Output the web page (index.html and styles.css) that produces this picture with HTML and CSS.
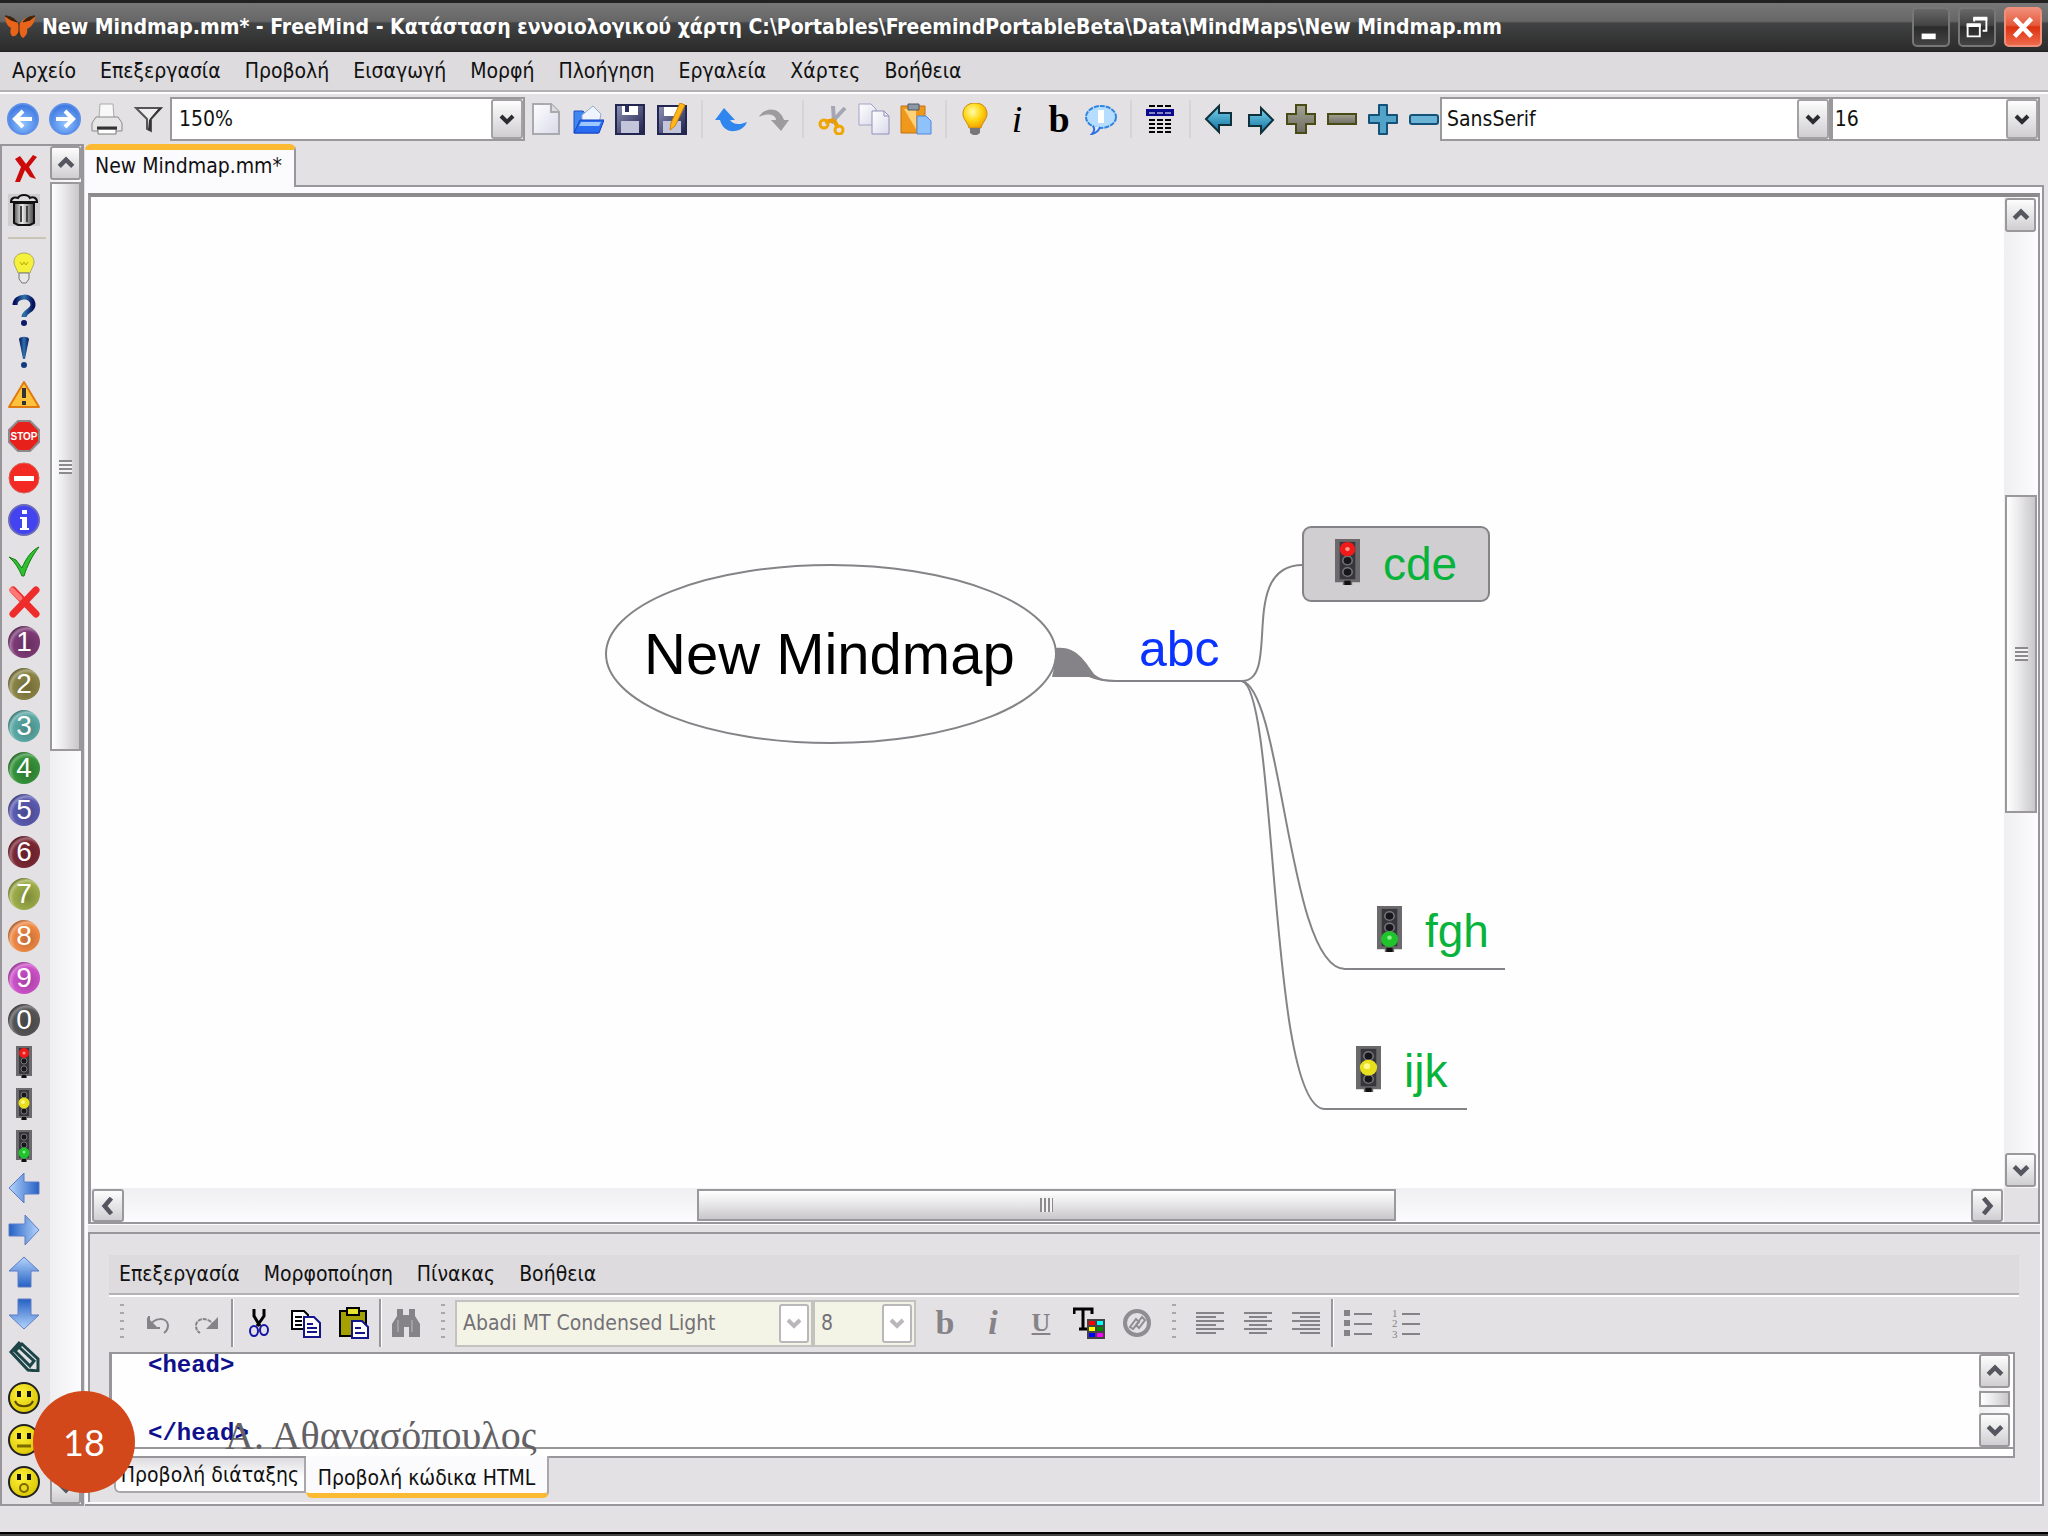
FILE: index.html
```
<!DOCTYPE html>
<html lang="el">
<head>
    <meta charset="UTF-8">
    <title>New Mindmap.mm* - FreeMind</title>
    <link rel="stylesheet" href="styles.css">
</head>
<body>

    <!-- shared gradients and symbols -->
    <svg class="defs" width="0" height="0">
        <defs>
            <radialGradient id="gBlue" cx=".5" cy=".65" r=".6"><stop offset="0" stop-color="#8fc4ff"/><stop offset="1" stop-color="#3f78e0"/></radialGradient>
            <radialGradient id="gBulb" cx=".4" cy=".35" r=".7"><stop offset="0" stop-color="#fffbb0"/><stop offset=".5" stop-color="#ffd916"/><stop offset="1" stop-color="#f09a00"/></radialGradient>
            <radialGradient id="gFace" cx=".4" cy=".35" r=".7"><stop offset="0" stop-color="#fff23a"/><stop offset="1" stop-color="#d9c400"/></radialGradient>
            <linearGradient id="gArrowLeft" x1="0" y1="0" x2="1" y2="0"><stop offset="0" stop-color="#b5d5fc"/><stop offset="1" stop-color="#2460c4"/></linearGradient>
            <linearGradient id="gArrowRight" x1="1" y1="0" x2="0" y2="0"><stop offset="0" stop-color="#b5d5fc"/><stop offset="1" stop-color="#2460c4"/></linearGradient>
            <linearGradient id="gArrowUp" x1="0" y1="1" x2="0" y2="0"><stop offset="0" stop-color="#2460c4"/><stop offset="1" stop-color="#b5d5fc"/></linearGradient>
            <linearGradient id="gArrowDown" x1="0" y1="0" x2="0" y2="1"><stop offset="0" stop-color="#2460c4"/><stop offset="1" stop-color="#b5d5fc"/></linearGradient>
            <linearGradient id="gTeal" x1="0" y1="0" x2="0" y2="1"><stop offset="0" stop-color="#7fd3ee"/><stop offset="1" stop-color="#0a6f9c"/></linearGradient>
            <linearGradient id="gGray" x1="0" y1="0" x2="0" y2="1"><stop offset="0" stop-color="#a3a392"/><stop offset="1" stop-color="#6d6d66"/></linearGradient>
            <linearGradient id="gCan" x1="0" y1="0" x2="1" y2="0"><stop offset="0" stop-color="#555"/><stop offset=".4" stop-color="#eee"/><stop offset="1" stop-color="#444"/></linearGradient>
            <linearGradient id="gDisk" x1="0" y1="0" x2="1" y2="1"><stop offset="0" stop-color="#8f93b8"/><stop offset="1" stop-color="#1c1e48"/></linearGradient>
            <linearGradient id="gPaper" x1="0" y1="0" x2="1" y2="1"><stop offset="0" stop-color="#ffffff"/><stop offset="1" stop-color="#d9d9ea"/></linearGradient>
            <linearGradient id="gMark" x1="0" y1="0" x2="1" y2="0"><stop offset="0" stop-color="#07105c"/><stop offset=".5" stop-color="#2f74ad"/><stop offset="1" stop-color="#07105c"/></linearGradient>
            <symbol id="up" viewBox="0 0 16 16"><path d="M2 11 8 5l6 6" fill="none" stroke="currentColor" stroke-width="4"/></symbol>
            <symbol id="down" viewBox="0 0 16 16"><path d="M2 5l6 6 6-6" fill="none" stroke="currentColor" stroke-width="4"/></symbol>
            <symbol id="left" viewBox="0 0 16 16"><path d="M11 1 5 8l6 7" fill="none" stroke="currentColor" stroke-width="4"/></symbol>
            <symbol id="right" viewBox="0 0 16 16"><path d="M5 1l6 7-6 7" fill="none" stroke="currentColor" stroke-width="4"/></symbol>
            <symbol id="lamp" viewBox="0 0 16 32">
                <path d="M0 0h16v30h-5v2H5v-2H0z" fill="#6b696c"/>
                <rect x="3" y="2" width="10" height="26" fill="#37363c"/>
                <circle cx="8" cy="7" r="3" fill="#17171b" stroke="#77757a"/>
                <circle cx="8" cy="15" r="3" fill="#17171b" stroke="#77757a"/>
                <circle cx="8" cy="23" r="3" fill="#17171b" stroke="#77757a"/>
                <rect x="6" y="29" width="4" height="3" fill="#111"/>
            </symbol>
            <symbol id="lampRed" viewBox="0 0 16 32"><use href="#lamp" width="16" height="32"/><circle cx="8" cy="7" r="5" fill="#f01a1a"/><circle cx="8" cy="7" r="1.5" fill="#ff9a8a"/></symbol>
            <symbol id="lampYellow" viewBox="0 0 16 32"><use href="#lamp" width="16" height="32"/><circle cx="8" cy="15" r="5.5" fill="#e8e01c"/><circle cx="7" cy="14" r="2" fill="#fff98a"/></symbol>
            <symbol id="lampGreen" viewBox="0 0 16 32"><use href="#lamp" width="16" height="32"/><circle cx="8" cy="23" r="5.5" fill="#1fc42c"/><circle cx="8" cy="22" r="1.5" fill="#8af28a"/></symbol>
        </defs>
    </svg>

    <header class="titlebar">
        <svg class="app-icon" viewBox="0 0 32 24"><path d="M1 1c6 0 11 4 14 9C18 4 24 1 31 1c0 6-3 11-8 13 1 4-1 7-4 9-2-1-3-4-4-7-2 4-4 6-7 5-2-2-2-5-1-8C3 11 1 6 1 1z" fill="#e8641a"/><path d="M1 1c5 0 9 2 12 6L7 5zM31 1c-5 0-9 2-12 6l7-2zM15 9v12" fill="#3a2410" stroke="#3a2410"/></svg>
        <h1>New Mindmap.mm* - FreeMind - Κατάσταση εννοιολογικού χάρτη C:\Portables\FreemindPortableBeta\Data\MindMaps\New Mindmap.mm</h1>
        <div class="win-buttons">
            <button type="button" aria-label="Minimize"><svg viewBox="0 0 32 32"><path d="M6 23h15v6H6z" fill="#fff"/></svg></button>
            <button type="button" aria-label="Restore"><svg viewBox="0 0 32 32"><path d="M13 10V7h13v13h-4M6 14h13v12H6z" fill="none" stroke="#fff" stroke-width="2"/><path d="M12 7h15M5 14h15" stroke="#fff" stroke-width="4"/></svg></button>
            <button type="button" class="close" aria-label="Close"><svg viewBox="0 0 32 32"><path d="M7 7l18 19M25 7 7 26" stroke="#fff" stroke-width="5"/></svg></button>
        </div>
    </header>

    <nav class="menubar">
        <a href="#">Αρχείο</a><a href="#">Επεξεργασία</a><a href="#">Προβολή</a><a href="#">Εισαγωγή</a><a href="#">Μορφή</a><a href="#">Πλοήγηση</a><a href="#">Εργαλεία</a><a href="#">Χάρτες</a><a href="#">Βοήθεια</a>
    </nav>

    <div class="toolbar">
        <button type="button" aria-label="Back"><svg viewBox="0 0 32 32"><circle cx="16" cy="16" r="15" fill="url(#gBlue)" stroke="#5d8fe8" stroke-width="2"/><path d="M25 16H9M16 8l-8 8 8 8" fill="none" stroke="#fff" stroke-width="4"/></svg></button>
        <button type="button" aria-label="Forward"><svg viewBox="0 0 32 32"><circle cx="16" cy="16" r="15" fill="url(#gBlue)" stroke="#5d8fe8" stroke-width="2"/><path d="M7 16h16M16 8l8 8-8 8" fill="none" stroke="#fff" stroke-width="4"/></svg></button>
        <button type="button" aria-label="Print"><svg viewBox="0 0 32 32"><path d="M9 1h13l1 14H8z" fill="#f8f8f8" stroke="#aaa"/><path d="M5 14h22l4 6v8H1v-8z" fill="#e6e6e6" stroke="#8a8a8a"/><path d="M7 26h18v5H7z" fill="#fff" stroke="#777"/><path d="M6 25h20" stroke="#333" stroke-width="3"/></svg></button>
        <button type="button" aria-label="Filter"><svg viewBox="0 0 32 32"><path d="M3 5h25L18 16v12l-4-2V16z" fill="#eee" stroke="#555" stroke-width="2"/><path d="M18 16v12l-3-1 1-10 10-12h3z" fill="#333"/></svg></button>
        <label class="combo zoom"><select aria-label="Zoom"><option>150%</option></select><span class="arrow"><svg viewBox="0 0 16 16"><use href="#down"/></svg></span></label>
        <button type="button" aria-label="New"><svg viewBox="0 0 32 32"><path d="M3 1h18l8 8v22H3z" fill="url(#gPaper)" stroke="#a9a9b0" stroke-width="2"/><path d="M21 1v8h8" fill="#ddd" stroke="#a9a9b0" stroke-width="2"/></svg></button>
        <button type="button" aria-label="Open"><svg viewBox="0 0 32 32"><path d="M2 8h9l3 3h12v19H2z" fill="#3f86f0" stroke="#1c50c8"/><path d="M10 12 21 3l8 8-2 10H10z" fill="#eef4ff" stroke="#98aac8"/><path d="M8 17h24l-5 13H2z" fill="#2a6cf0" stroke="#1443c0"/><path d="M9 19h20l-2 4H7z" fill="#9cc8ff"/></svg></button>
        <button type="button" aria-label="Save"><svg viewBox="0 0 32 32"><path d="M2 2h28v29H2z" fill="url(#gDisk)" stroke="#23264f" stroke-width="2"/><path d="M8 3h16v9H8z" fill="#fff"/><path d="M11 3h4v6h-4z" fill="#2b2e5e"/><path d="M7 18h18v12H7z" fill="#c3c5da"/></svg></button>
        <button type="button" aria-label="Save as"><svg viewBox="0 0 32 32"><path d="M2 3h28v28H2z" fill="url(#gDisk)" stroke="#23264f" stroke-width="2"/><path d="M8 4h14v9H8z" fill="#fff"/><path d="M7 18h18v12H7z" fill="#c3c5da"/><path d="M24 0l5 2-10 21-5 4 1-7z" fill="#ffb81c" stroke="#d98200"/></svg></button>
        <span class="sep"></span>
        <button type="button" aria-label="Undo"><svg viewBox="0 0 32 32"><path d="M9 5 0 17h5c2 8 8 12 15 11 6-1 10-4 12-9-7 3-14 3-17-2h5z" fill="#2f86ee"/></svg></button>
        <button type="button" aria-label="Redo"><svg viewBox="0 0 32 32"><path d="M24 28 14 17h5c0-5-7-8-17-3 4-9 20-12 25 3h5z" fill="#9c9c9c"/></svg></button>
        <span class="sep"></span>
        <button type="button" aria-label="Cut"><svg viewBox="0 0 32 32"><path d="M17 3l1 16M29 5 15 20" stroke="#a5a5b4" stroke-width="4"/><path d="M18 17 9 19M18 17l4 8" stroke="#e89c00" stroke-width="4"/><circle cx="8" cy="21" r="4" fill="none" stroke="#f0a500" stroke-width="3"/><circle cx="23" cy="27" r="4" fill="none" stroke="#f0a500" stroke-width="3"/></svg></button>
        <button type="button" aria-label="Copy"><svg viewBox="0 0 32 32"><path d="M1 1h12l5 5v16H1z" fill="url(#gPaper)" stroke="#a3a3c4"/><path d="M14 8h12l5 5v18H14z" fill="url(#gPaper)" stroke="#9090b8"/><path d="M26 8v5h5" fill="none" stroke="#9090b8"/></svg></button>
        <button type="button" aria-label="Paste"><svg viewBox="0 0 32 32"><path d="M1 3h24v27H1z" fill="#f0981c" stroke="#c07010"/><path d="M4 6h12v20z" fill="#ffd27a"/><path d="M8 1h11v6H8z" fill="#8c98a8" stroke="#4d5866"/><path d="M17 13h9l5 5v13H17z" fill="#8fc2fb" stroke="#4f88d8"/></svg></button>
        <span class="sep"></span>
        <button type="button" aria-label="Idea"><svg viewBox="0 0 32 32"><path d="M16 0c8 0 12 5 12 11 0 5-5 9-6 14H10C9 20 4 16 4 11 4 5 8 0 16 0z" fill="url(#gBulb)" stroke="#c98a10"/><path d="M11 25h10v5l-3 2h-4l-3-2z" fill="#77777a"/></svg></button>
        <button type="button" class="glyph italic" aria-label="Italic">i</button>
        <button type="button" class="glyph" aria-label="Bold">b</button>
        <button type="button" aria-label="Cloud"><svg viewBox="0 0 32 32"><ellipse cx="16" cy="14" rx="15" ry="11" fill="#b5ddff" stroke="#2f86e0" stroke-width="2" stroke-dasharray="5 1"/><path d="M8 23c2 3 1 6-1 8 4-1 7-4 8-7" fill="#d9efff" stroke="#2f6fe0" stroke-width="2"/><path d="M13 7h6v13h-6z" fill="#fff"/></svg></button>
        <span class="sep"></span>
        <button type="button" aria-label="Attributes"><svg viewBox="0 0 32 32"><path d="M5 3h22M5 17h22M5 21h22M5 25h22M5 29h22" stroke="#000" stroke-width="2" stroke-dasharray="6 2"/><path d="M2 6h28v7H2z" fill="#0a0a8c"/><path d="M5 10h22" stroke="#fff" stroke-dasharray="6 2"/></svg></button>
        <span class="sep"></span>
        <div class="narrow">
            <button type="button" aria-label="Previous"><svg viewBox="0 0 32 32"><path d="M3 16 16 3v7h12v12H16v7z" fill="url(#gTeal)" stroke="#10303c" stroke-width="2"/></svg></button>
            <button type="button" aria-label="Next"><svg viewBox="0 0 32 32"><path d="M29 17 17 5v7H5v11h12v7z" fill="url(#gTeal)" stroke="#10303c" stroke-width="2"/></svg></button>
            <button type="button" aria-label="Unfold all"><svg viewBox="0 0 32 32"><path d="M11 2h10v9h9v10h-9v9H11v-9H2V11h9z" fill="url(#gGray)" stroke="#474b14" stroke-width="2"/></svg></button>
            <button type="button" aria-label="Fold all"><svg viewBox="0 0 32 32"><path d="M2 11h28v10H2z" fill="url(#gGray)" stroke="#474b14" stroke-width="2"/></svg></button>
            <button type="button" aria-label="Unfold one"><svg viewBox="0 0 32 32"><path d="M12 2h8v10h10v8H20v11h-8V20H2v-8h10z" fill="#53a3c8" stroke="#14527a" stroke-width="2" stroke-linejoin="round"/></svg></button>
            <button type="button" aria-label="Fold one"><svg viewBox="0 0 32 32"><rect x="2" y="12" width="28" height="9" rx="2" fill="#6cb4d6" stroke="#14527a" stroke-width="2"/></svg></button>
        </div>
        <label class="combo family"><select aria-label="Font"><option>SansSerif</option></select><span class="arrow"><svg viewBox="0 0 16 16"><use href="#down"/></svg></span></label>
        <label class="combo size"><select aria-label="Font size"><option>16</option></select><span class="arrow"><svg viewBox="0 0 16 16"><use href="#down"/></svg></span></label>
    </div>

    <div class="workspace">
        <aside class="iconbar">
            <div class="icons">
                <button type="button" aria-label="Remove last icon"><svg viewBox="0 0 32 32"><path d="M7 7l5-3 6 8 7-9 4 2-8 10 7 12-6-2-5-7-5 12H7l6-15z" fill="#cc0a0a"/></svg></button>
                <button type="button" class="trash" aria-label="Remove all icons"><svg viewBox="0 0 32 32"><path d="M6 9h20v20l-4 2H10l-4-2z" fill="url(#gCan)" stroke="#111" stroke-width="2"/><path d="M3 8c0-5 5-5 7-4 2-4 10-4 12 0 3-2 7 0 7 4z" fill="#ddd" stroke="#111" stroke-width="2"/><path d="M13 12v16M19 12v16" stroke="#444" stroke-width="2"/></svg></button>
                <hr>
                <button type="button" aria-label="Idea"><svg viewBox="0 0 32 32"><path d="M16 1c7 0 10 5 10 9s-3 7-4 11H10C9 17 6 14 6 10s3-9 10-9z" fill="#f6f23c" stroke="#a8a86a"/><path d="M12 10l2 3 2-3 2 3 2-3" fill="none" stroke="#b8a800"/><path d="M11 21h10v6l-3 4h-4l-3-4z" fill="#e6e6e6" stroke="#777"/></svg></button>
                <button type="button" aria-label="Question"><svg viewBox="0 0 32 32"><path d="M7 11c0-10 18-11 18 0 0 6-9 6-9 12" fill="none" stroke="url(#gMark)" stroke-width="5"/><circle cx="16" cy="29" r="3" fill="#0d1a68"/></svg></button>
                <button type="button" aria-label="Important"><svg viewBox="0 0 32 32"><path d="M11 3c1-3 9-3 10 0l-4 20h-2z" fill="url(#gMark)"/><circle cx="16" cy="29" r="3" fill="#123a7c"/></svg></button>
                <button type="button" aria-label="Warning"><svg viewBox="0 0 32 32"><path d="M16 4 31 29H1z" fill="#ffc23c" stroke="#e07a10" stroke-width="2" stroke-linejoin="round"/><path d="M16 10v10M16 23v4" stroke="#333" stroke-width="4"/></svg></button>
                <button type="button" aria-label="Stop"><svg viewBox="0 0 32 32"><path d="M10 1h12l9 9v12l-9 9H10l-9-9V10z" fill="#e8201c" stroke="#8c8a8a" stroke-width="2"/><text x="16" y="20" class="stop">STOP</text></svg></button>
                <button type="button" aria-label="No entry"><svg viewBox="0 0 32 32"><circle cx="16" cy="16" r="15" fill="#f32a24" stroke="#d86058"/><path d="M6 14h20v5H6z" fill="#fff"/></svg></button>
                <button type="button" aria-label="Info"><svg viewBox="0 0 32 32"><circle cx="16" cy="16" r="15" fill="#4343f0" stroke="#6a6ab8" stroke-width="2"/><path d="M14 6h5v4h-5zM12 13h7v11h2v2h-9v-2h2v-9h-2z" fill="#fff"/></svg></button>
                <button type="button" class="short" aria-label="Ok"><svg viewBox="0 0 32 32"><path d="M1 11l7 3 6 8C18 12 24 4 31 1 24 10 19 20 16 30h-2C11 23 7 16 1 11z" fill="#2dc22d" stroke="#1a7a1a"/></svg></button>
                <button type="button" class="short" aria-label="Not ok"><svg viewBox="0 0 32 32"><path d="M5 4l23 24M28 4 5 28" stroke="#ee2c2c" stroke-width="7" stroke-linecap="round"/><path d="M4 4l8 8" stroke="#f77" stroke-width="5" stroke-linecap="round"/></svg></button>
                <button type="button"><span class="num n1">1</span></button>
                <button type="button"><span class="num n2">2</span></button>
                <button type="button"><span class="num n3">3</span></button>
                <button type="button"><span class="num n4">4</span></button>
                <button type="button"><span class="num n5">5</span></button>
                <button type="button"><span class="num n6">6</span></button>
                <button type="button"><span class="num n7">7</span></button>
                <button type="button"><span class="num n8">8</span></button>
                <button type="button"><span class="num n9">9</span></button>
                <button type="button"><span class="num n0">0</span></button>
                <button type="button" aria-label="Red light"><svg viewBox="0 0 16 32"><use href="#lampRed"/></svg></button>
                <button type="button" aria-label="Yellow light"><svg viewBox="0 0 16 32"><use href="#lampYellow"/></svg></button>
                <button type="button" aria-label="Green light"><svg viewBox="0 0 16 32"><use href="#lampGreen"/></svg></button>
                <button type="button" aria-label="Left"><svg viewBox="0 0 32 32"><path d="M1 16 16 1v9h15v12H16v9z" fill="url(#gArrowLeft)" stroke="#5f7cc4"/></svg></button>
                <button type="button" aria-label="Right"><svg viewBox="0 0 32 32"><path d="M31 16 17 1v9H1v12h16v9z" fill="url(#gArrowRight)" stroke="#5f7cc4"/></svg></button>
                <button type="button" aria-label="Up"><svg viewBox="0 0 32 32"><path d="M16 1 31 15h-8v16H10V15H1z" fill="url(#gArrowUp)" stroke="#5f7cc4"/></svg></button>
                <button type="button" aria-label="Down"><svg viewBox="0 0 32 32"><path d="M16 31 31 17h-8V1H10v16H1z" fill="url(#gArrowDown)" stroke="#5f7cc4"/></svg></button>
                <button type="button" aria-label="Attach"><svg viewBox="0 0 32 32"><path d="M12 2 3 12l17 18 10 1V19L14 4 7 11l15 15 4-5-14-13" fill="none" stroke="#1c4548" stroke-width="3"/></svg></button>
                <button type="button" aria-label="Happy"><svg viewBox="0 0 32 32"><circle cx="16" cy="16" r="15" fill="url(#gFace)" stroke="#222" stroke-width="2"/><path d="M11 9v6M21 9v6" stroke="#111" stroke-width="4"/><path d="M7 19c3 7 15 7 18 0" fill="none" stroke="#5a4a00" stroke-width="2"/></svg></button>
                <button type="button" aria-label="Neutral"><svg viewBox="0 0 32 32"><circle cx="16" cy="16" r="15" fill="url(#gFace)" stroke="#222" stroke-width="2"/><path d="M11 9v6M21 9v6" stroke="#111" stroke-width="4"/><path d="M9 22h14" stroke="#7a6a00" stroke-width="3"/></svg></button>
                <button type="button" aria-label="Surprised"><svg viewBox="0 0 32 32"><circle cx="16" cy="16" r="15" fill="url(#gFace)" stroke="#222" stroke-width="2"/><path d="M11 8v6M21 8v6" stroke="#111" stroke-width="4"/><circle cx="16" cy="22" r="4" fill="none" stroke="#7a6a00" stroke-width="2"/></svg></button>
            </div>
            <div class="scroll vertical">
                <button type="button" aria-label="Scroll up"><svg viewBox="0 0 16 16"><use href="#up"/></svg></button>
                <div class="thumb icons-thumb"><span class="grip"></span></div>
                <span class="track"></span>
                <button type="button" aria-label="Scroll down"><svg viewBox="0 0 16 16"><use href="#down"/></svg></button>
            </div>
        </aside>

        <main>
            <div class="tabs">
                <button type="button" class="tab">New Mindmap.mm*</button>
                <span class="rest"></span>
            </div>

            <div class="frame">
                <section class="map">
                    <div class="canvas">
                        <svg class="edges" width="1600" height="1000">
                            <g fill="none" stroke="#858387" stroke-width="2">
                                <ellipse cx="740" cy="457" rx="225" ry="89"/>
                                <path d="M965 451c20-2 28 12 38 26 6 5 14 7 22 7-12 1-20-2-27-4h-37c2-8 3-18 4-29z" fill="#858387" stroke="none"/>
                                <path d="M999 479c8 4 16 5 26 5h126C1191 484 1146 368 1212 368"/>
                                <path d="M1151 484C1192 494 1197 772 1254 772h160"/>
                                <path d="M1151 484C1187 494 1177 912 1234 912h142"/>
                            </g>
                        </svg>
                        <div class="node root">New Mindmap</div>
                        <div class="node abc">abc</div>
                        <div class="node leaf cde"><svg viewBox="0 0 16 32" preserveAspectRatio="none"><use href="#lampRed"/></svg>cde</div>
                        <div class="node leaf fgh"><svg viewBox="0 0 16 32" preserveAspectRatio="none"><use href="#lampGreen"/></svg>fgh</div>
                        <div class="node leaf ijk"><svg viewBox="0 0 16 32" preserveAspectRatio="none"><use href="#lampYellow"/></svg>ijk</div>
                    </div>
                    <div class="scroll vertical">
                        <button type="button" aria-label="Scroll up"><svg viewBox="0 0 16 16"><use href="#up"/></svg></button>
                        <span class="track before"></span>
                        <div class="thumb map-thumb"><span class="grip"></span></div>
                        <span class="track"></span>
                        <button type="button" aria-label="Scroll down"><svg viewBox="0 0 16 16"><use href="#down"/></svg></button>
                    </div>
                    <div class="scroll horizontal">
                        <button type="button" aria-label="Scroll left"><svg viewBox="0 0 16 16"><use href="#left"/></svg></button>
                        <span class="track"></span>
                        <div class="thumb wide-thumb"><span class="grip"></span></div>
                        <span class="track after"></span>
                        <button type="button" aria-label="Scroll right"><svg viewBox="0 0 16 16"><use href="#right"/></svg></button>
                    </div>
                </section>

                <section class="notes">
                    <nav class="menubar">
                        <a href="#">Επεξεργασία</a><a href="#">Μορφοποίηση</a><a href="#">Πίνακας</a><a href="#">Βοήθεια</a>
                    </nav>
                    <div class="toolbar note-tools">
                        <span class="handle"></span>
                        <button type="button" aria-label="Undo"><svg viewBox="0 0 32 32"><path d="M7 9v12h11M8 19c4-9 17-9 18-1 0 4-1 6-4 8" fill="none" stroke="#858387" stroke-width="2"/><path d="M5 10v12h12z" fill="#858387"/></svg></button>
                        <button type="button" aria-label="Redo"><svg viewBox="0 0 32 32"><path d="M24 19c-4-9-17-9-18-1 0 4 1 6 4 8" fill="none" stroke="#858387" stroke-width="2" stroke-dasharray="4 1"/><path d="M28 10v12H16z" fill="#858387"/></svg></button>
                        <span class="sep"></span>
                        <button type="button" aria-label="Cut"><svg viewBox="0 0 32 32"><path d="M12 2v7l6 10M22 2v7l-7 10" fill="none" stroke="#000" stroke-width="3"/><ellipse cx="12" cy="24" rx="4" ry="5" fill="none" stroke="#1414a8" stroke-width="2"/><ellipse cx="22" cy="23" rx="4" ry="5" fill="none" stroke="#1414a8" stroke-width="2"/></svg></button>
                        <button type="button" aria-label="Copy"><svg viewBox="0 0 32 32"><path d="M2 4h12l4 4v14H2z" fill="#fff" stroke="#000" stroke-width="2"/><path d="M5 10h7M5 14h7M5 18h7" stroke="#000" stroke-width="2"/><path d="M14 10h10l6 6v14H14z" fill="#fff" stroke="#14148c" stroke-width="2"/><path d="M17 17h6M17 21h10M17 25h10" stroke="#14148c" stroke-width="2"/></svg></button>
                        <button type="button" aria-label="Paste"><svg viewBox="0 0 32 32"><path d="M2 4h26v25H2z" fill="#a3a000" stroke="#000" stroke-width="2"/><path d="M9 1h12v7H9z" fill="#e8e430" stroke="#000" stroke-width="2"/><path d="M14 14h10l6 6v11H14z" fill="#fff" stroke="#14148c" stroke-width="2"/><path d="M17 21h6M17 26h10" stroke="#14148c" stroke-width="2"/></svg></button>
                        <span class="sep"></span>
                        <button type="button" aria-label="Find"><svg viewBox="0 0 32 32"><path d="M7 2h6v6h6V2h6v7l5 8v13H19V20h-5v10H2V17l5-8z" fill="#858387"/><path d="M8 13v12M22 13v12" stroke="#bbb" stroke-width="1"/></svg></button>
                        <span class="handle"></span>
                        <label class="combo off note-family"><select disabled aria-label="Font"><option>Abadi MT Condensed Light</option></select><span class="arrow"><svg viewBox="0 0 16 16"><use href="#down"/></svg></span></label>
                        <label class="combo off note-size"><select disabled aria-label="Font size"><option>8</option></select><span class="arrow"><svg viewBox="0 0 16 16"><use href="#down"/></svg></span></label>
                        <button type="button" class="glyph dim" aria-label="Bold">b</button>
                        <button type="button" class="glyph dim slant" aria-label="Italic">i</button>
                        <button type="button" class="glyph dim under" aria-label="Underline">U</button>
                        <button type="button" aria-label="Color"><svg viewBox="0 0 32 32"><path d="M1 7V2h18v5M10 2v20M6 22h8" fill="none" stroke="#000" stroke-width="3"/><path d="M14 12h18v20H14z" fill="#444"/><path d="M16 14h6v4h-6z" fill="red"/><path d="M24 14h6v4h-6z" fill="cyan"/><path d="M16 20h6v4h-6z" fill="#ff0"/><path d="M24 20h6v4h-6z" fill="#080"/><path d="M16 26h6v4h-6z" fill="#00f"/><path d="M24 26h6v4h-6z" fill="#f0f"/></svg></button>
                        <button type="button" aria-label="Link"><svg viewBox="0 0 32 32"><circle cx="16" cy="16" r="12" fill="none" stroke="#8f8d91" stroke-width="4"/><path d="M9 20l6-8 3 3-6 7zM15 18l6-8 3 3-6 8z" fill="none" stroke="#8f8d91" stroke-width="2"/></svg></button>
                        <span class="handle"></span>
                        <button type="button" aria-label="Align left"><svg viewBox="0 0 32 32"><path d="M2 6h28M2 10h20M2 14h28M2 18h20M2 22h28M2 26h20" stroke="#858387" stroke-width="2"/></svg></button>
                        <button type="button" aria-label="Align center"><svg viewBox="0 0 32 32"><path d="M2 6h28M7 10h18M2 14h28M7 18h18M2 22h28M7 26h18" stroke="#858387" stroke-width="2"/></svg></button>
                        <button type="button" aria-label="Align right"><svg viewBox="0 0 32 32"><path d="M2 6h28M10 10h20M2 14h28M10 18h20M2 22h28M10 26h20" stroke="#858387" stroke-width="2"/></svg></button>
                        <span class="sep"></span>
                        <button type="button" aria-label="Bullets"><svg viewBox="0 0 32 32"><path d="M2 3h6v6H2zM2 13h6v6H2zM2 23h6v6H2z" fill="#858387"/><path d="M12 7h18M12 17h18M12 27h18" stroke="#858387" stroke-width="2"/></svg></button>
                        <button type="button" aria-label="Numbering"><svg viewBox="0 0 32 32"><g class="digits"><text x="2" y="10">1</text><text x="2" y="20">2</text><text x="2" y="31">3</text></g><path d="M12 7h18M12 17h18M12 27h18" stroke="#858387" stroke-width="2"/></svg></button>
                    </div>
                    <div class="editor">
                        <textarea aria-label="HTML" spellcheck="false">&lt;head&gt;

&lt;/head&gt;</textarea>
                        <div class="scroll vertical">
                            <button type="button" aria-label="Scroll up"><svg viewBox="0 0 16 16"><use href="#up"/></svg></button>
                            <div class="thumb code-thumb"></div>
                            <span class="track"></span>
                            <button type="button" aria-label="Scroll down"><svg viewBox="0 0 16 16"><use href="#down"/></svg></button>
                        </div>
                    </div>
                    <div class="view-tabs">
                        <button type="button">Προβολή διάταξης</button>
                        <button type="button" class="current">Προβολή κώδικα HTML</button>
                    </div>
                </section>
            </div>
        </main>
    </div>

    <footer class="statusbar"></footer>

    <div class="page-number">18</div>
    <div class="author">Α. Αθανασόπουλος</div>
</body>
</html>
```
FILE: styles.css
```
* {
    box-sizing: border-box;
}

body {
    margin: 0;
    height: 100vh;
    min-height: 1200px;
    display: flex;
    flex-direction: column;
    position: relative;
    overflow: hidden;
    background: #e3e1e4;
    color: #111;
    font-family: "DejaVu Sans Condensed", "Noto Sans", sans-serif;
    font-size: 21px;
}

button {
    font: inherit;
    color: inherit;
    padding: 0;
    margin: 0;
    border: 0;
    background: none;
}

svg {
    display: block;
}

.defs {
    position: absolute;
}

/* title */
.titlebar {
    height: 52px;
    display: flex;
    align-items: center;
    padding: 0 6px 0 4px;
    border-top: 3px solid #222;
    border-bottom: 1px solid #221f20;
    background: linear-gradient(#777 0, #666 38%, #414243 42%, #2b2b2b 100%);
    color: #fff;
}

.app-icon {
    width: 32px;
    height: 24px;
    margin-right: 6px;
}

.titlebar h1 {
    flex: 1;
    margin: 0;
    font-size: 21px;
    font-weight: bold;
    white-space: nowrap;
}

.win-buttons {
    display: flex;
    gap: 8px;
}

.win-buttons button {
    width: 38px;
    height: 40px;
    padding: 2px;
    border: 2px solid #777;
    border-radius: 5px;
    background: linear-gradient(#686868, #444 45%, #2b2b2b 50%, #444);
}

.win-buttons .close {
    border-color: #f0907c;
    background: linear-gradient(#f08c78, #e55a3c 45%, #dc3210 50%, #ee6a4c);
}

/* menus */
.menubar {
    height: 42px;
    display: flex;
    align-items: center;
    padding-bottom: 3px;
    background: #dddbde;
    border-bottom: 2px solid #fff;
    box-shadow: inset 0 -2px #b3b1b4;
}

.menubar a {
    padding: 0 12px;
    color: #111;
    text-decoration: none;
}

/* toolbars */
.toolbar {
    height: 50px;
    display: flex;
    align-items: center;
    padding: 0 8px 0 2px;
}

.toolbar button {
    width: 42px;
    height: 42px;
    flex: none;
}

.toolbar button svg {
    width: 32px;
    height: 32px;
    margin: auto;
}

.toolbar .narrow {
    display: flex;
    margin-right: -4px;
}

.toolbar .narrow button {
    width: 41px;
}

.toolbar .glyph {
    font: bold 38px "Liberation Serif", serif;
    line-height: 38px;
    color: #000;
}

.toolbar .italic {
    font-style: italic;
    font-weight: normal;
}

.toolbar .slant {
    font-style: italic;
}

.toolbar .sep {
    width: 17px;
    height: 38px;
    flex: none;
    background: linear-gradient(#d6d4d7, #d6d4d7) center / 2px 100% no-repeat;
}

.combo {
    display: flex;
    height: 44px;
    border: 2px solid #9a989b;
    background: #fff;
}

.combo select {
    flex: 1;
    min-width: 0;
    appearance: none;
    border: 0;
    padding: 0 0 0 5px;
    background: none;
    font: inherit;
    color: #111;
    opacity: 1;
}

.combo .arrow {
    width: 32px;
    flex: none;
    display: grid;
    place-items: center;
    border: 2px solid #a3a1a4;
    border-radius: 3px;
    background: linear-gradient(#fdfdfd, #d0ced1);
    color: #2b2b30;
}

.combo .arrow svg {
    width: 18px;
    height: 16px;
}

.combo.zoom {
    width: 355px;
}

.combo.zoom select {
    padding-left: 7px;
}

.combo.family {
    flex: 392;
}

.combo.size {
    flex: 208;
}

.combo.size select {
    padding-left: 2px;
}

/* workspace */
.workspace {
    flex: 1;
    min-height: 0;
    display: flex;
}

.iconbar {
    width: 84px;
    flex: none;
    display: flex;
    overflow: hidden;
    border: 2px solid #98969a;
    border-right-width: 3px;
}

.icons {
    width: 48px;
    flex: none;
    padding: 6px 0 0 6px;
}

.icons button {
    display: block;
    width: 32px;
    height: 42px;
}

.icons .short {
    height: 40px;
}

.icons button svg {
    width: 32px;
    height: 32px;
    margin-bottom: 10px;
}

.icons .short svg {
    margin-bottom: 8px;
}

.icons .trash svg {
    background: #cfcdd0;
}

.icons hr {
    height: 2px;
    margin: 1px 4px 13px 0;
    border: 0;
    background: #c8c5b4;
}

.stop {
    font: bold 10px "Liberation Sans", sans-serif;
    fill: #fff;
    text-anchor: middle;
}

.num {
    display: block;
    width: 32px;
    height: 32px;
    margin-bottom: 10px;
    border-radius: 50%;
    font: 28px/32px "Liberation Sans", sans-serif;
    color: #fff;
    text-align: center;
    background-image: radial-gradient(circle at 60% 60%, rgba(0, 0, 0, .2), transparent 50%, rgba(255, 255, 255, .3) 62%, rgba(0, 0, 0, .25) 72%);
}

.n1 { background-color: #7d3a75; }
.n2 { background-color: #8a8345; }
.n3 { background-color: #5aa8a4; }
.n4 { background-color: #35923a; }
.n5 { background-color: #5a5ab0; }
.n6 { background-color: #7a2834; }
.n7 { background-color: #9cac48; }
.n8 { background-color: #ee8844; }
.n9 { background-color: #cc50c8; }
.n0 { background-color: #555; }

/* scrollbars */
.scroll {
    display: flex;
    background: linear-gradient(90deg, #efeef0, #fcfbfd);
}

.scroll button {
    flex: none;
    display: grid;
    place-items: center;
    border: 2px solid #9a989b;
    border-radius: 3px;
    background: linear-gradient(#fdfdfd, #d0ced1);
    color: #55565f;
}

.scroll button svg {
    width: 18px;
    height: 18px;
}

.scroll .track {
    flex: 1;
}

.vertical {
    flex-direction: column;
    width: 31px;
}

.vertical button {
    width: 31px;
    height: 34px;
}

.horizontal button {
    width: 32px;
    height: 33px;
}

.thumb {
    display: grid;
    place-items: center;
    border: 2px solid #9a989b;
    background: linear-gradient(90deg, #fff, #ebeaec 40%, #c9c7ca);
}

.horizontal .thumb {
    background: linear-gradient(#fff, #ebeaec 40%, #c9c7ca);
}

.grip {
    width: 13px;
    height: 14px;
    background: repeating-linear-gradient(#8c8a8d 0 2px, #f4f4f4 2px 4px);
}

.horizontal .grip {
    background: repeating-linear-gradient(90deg, #8c8a8d 0 2px, #f4f4f4 2px 4px);
}

.icons-thumb {
    height: 569px;
    margin-top: 2px;
}

/* document tab */
main {
    flex: 1;
    min-width: 0;
    display: flex;
    flex-direction: column;
    margin: 0 4px 0 1px;
}

.tabs {
    height: 43px;
    flex: none;
    display: flex;
}

.tab {
    padding: 0 12px 6px 10px;
    border-top: 6px solid #fcb932;
    border-right: 2px solid #98969a;
    border-radius: 6px 6px 0 0;
    background: #fbfafc;
}

.tabs .rest {
    flex: 1;
    border-bottom: 2px solid #98969a;
}

.frame {
    flex: 1;
    min-height: 0;
    display: flex;
    flex-direction: column;
    padding: 6px 2px 2px 3px;
    border-right: 2px solid #98969a;
    border-bottom: 2px solid #98969a;
    background: #fbfafc;
}

/* map */
.map {
    flex: 1;
    min-height: 0;
    display: grid;
    grid-template-columns: 1fr 34px;
    grid-template-rows: 1fr 34px;
    border: 2px solid #98969a;
    border-top: 4px solid #8c8a8d;
    border-left-width: 3px;
    background: #e3e1e4;
}

.canvas {
    position: relative;
    overflow: hidden;
    background: #fefefe;
}

.map > .scroll {
    padding: 1px;
}

.map > .vertical {
    width: 34px;
}

.map .before {
    flex: 264;
}

.map .vertical .track:not(.before) {
    flex: 342;
}

.map-thumb {
    height: 318px;
}

.map .horizontal {
    background: linear-gradient(#efeef0, #fcfbfd);
}

.map .horizontal .after {
    flex: 576;
}

.map .horizontal .track:not(.after) {
    flex: 573;
}

.wide-thumb {
    width: 699px;
}

.edges {
    position: absolute;
    left: 0;
    top: 0;
}

.node {
    position: absolute;
    font-family: "Liberation Sans", Arial, sans-serif;
    white-space: nowrap;
}

.root {
    left: 553px;
    top: 424px;
    font-size: 58px;
    line-height: 66px;
    color: #000;
}

.abc {
    left: 1048px;
    top: 424px;
    font-size: 50px;
    line-height: 56px;
    color: #0a33ff;
}

.leaf {
    display: flex;
    align-items: center;
    gap: 23px;
    font-size: 46px;
    line-height: 52px;
    color: #08b33c;
}

.leaf svg {
    width: 25px;
    height: 46px;
    margin-bottom: 4px;
}

.cde {
    left: 1211px;
    top: 329px;
    width: 188px;
    height: 76px;
    padding-left: 31px;
    border: 2px solid #858387;
    border-radius: 9px;
    background: #d0ced1;
}

.fgh {
    left: 1286px;
    top: 708px;
}

.ijk {
    left: 1265px;
    top: 848px;
}

/* note editor */
.notes {
    flex: none;
    margin-top: 8px;
    padding: 21px 21px 4px 19px;
    border-top: 2px solid #98969a;
    border-left: 2px solid #98969a;
    background: #e3e1e4;
    box-shadow: 0 -7px #e3e1e4;
}

.notes .menubar a:first-child {
    padding-left: 10px;
}

.note-tools {
    height: 55px;
    padding: 0 0 3px;
}

.note-tools button {
    width: 48px;
}

.note-tools .sep {
    width: 4px;
    height: 48px;
    background: #98969a;
    border-left: 1px solid #e3e1e4;
    border-right: 1px solid #fff;
}

.note-tools .handle {
    width: 25px;
    height: 38px;
    flex: none;
    background: repeating-linear-gradient(#a9a7aa 0 2px, transparent 2px 8px) center / 4px 100% no-repeat;
}

.note-tools .glyph {
    font-size: 34px;
    line-height: 32px;
}

.note-tools .dim {
    color: #858387;
}

.note-tools .under {
    font-size: 26px;
    text-decoration: underline;
}

.combo.off {
    height: 47px;
    border-color: #c4c2c0;
    padding: 2px;
    background: #f4f4e6;
}

.combo.off select {
    padding-left: 4px;
    color: #737177;
}

.combo.off .arrow {
    width: 30px;
    border-color: #b9b7ba;
    background: #fff;
    color: #b9b7ba;
}

.note-family {
    width: 358px;
}

.note-size {
    width: 103px;
    margin-right: 5px;
}

.digits {
    font: 11px "Liberation Serif", serif;
    fill: #858387;
}

.editor {
    height: 106px;
    display: flex;
    margin-right: 4px;
    border: 2px solid #98969a;
    border-left-width: 3px;
    box-shadow: inset 0 -7px #fff, inset 0 -9px #98969a;
    background: #fefefe;
    padding-bottom: 9px;
}

.editor textarea {
    flex: 1;
    resize: none;
    border: 0;
    outline: 0;
    overflow: hidden;
    padding: 0 0 0 36px;
    background: none;
    color: #10108c;
    font: bold 24px/34px "Liberation Mono", monospace;
    margin-top: -5px;
}

.editor .scroll {
    border-right: 0;
    margin-right: 3px;
}

.editor button {
    height: 34px;
}

.code-thumb {
    height: 16px;
    margin-top: 3px;
}

.view-tabs {
    display: flex;
    align-items: flex-start;
    height: 40px;
    padding-left: 5px;
}

.view-tabs button {
    height: 35px;
    width: 192px;
    border: 2px solid #a9a7aa;
    border-top: 0;
    border-radius: 0 0 0 6px;
    background: linear-gradient(#dddbde, #fff 60%);
}

.view-tabs .current {
    position: relative;
    width: 243px;
    height: 42px;
    margin-top: -2px;
    padding-top: 6px;
    border-left: 0;
    border-bottom: 5px solid #fcb932;
    border-radius: 0 0 6px 6px;
    background: #fbfafc;
}

.statusbar {
    height: 30px;
    flex: none;
    border-bottom: 2px solid #444;
    box-shadow: inset 0 -2px #000;
}

/* slide overlay */
.page-number {
    position: absolute;
    left: 33px;
    bottom: 43px;
    width: 102px;
    height: 102px;
    border-radius: 50%;
    background: #d3481a;
    color: #fff;
    font: 36px/102px Lato, sans-serif;
    text-align: center;
}

.author {
    position: absolute;
    left: 225px;
    bottom: 77px;
    color: #636163;
    font: 40px/46px "Liberation Serif", serif;
    white-space: nowrap;
}
```
